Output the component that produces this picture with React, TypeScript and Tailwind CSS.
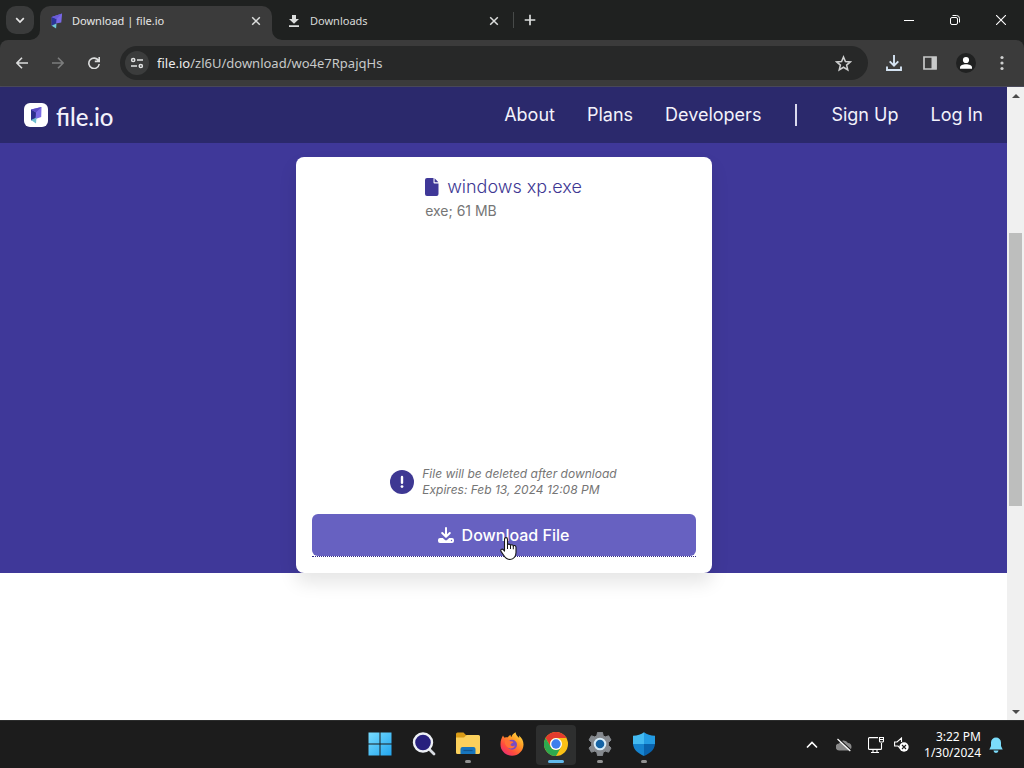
import type { ReactNode } from "react";

const uiFont = "font-['Noto_Sans','Open_Sans',sans-serif]";
const siteFont = "font-['Inter','Liberation_Sans',sans-serif]";

function FileMark({ className }: { className?: string }) {
  return (
    <svg viewBox="0 0 16 20" className={className} aria-hidden="true">
      <path d="M2 5 15 0.5 14 12 7 13 2 16Z" fill="#7a69e6" />
      <path d="M2 5 8 7.5 7.5 13 2 16Z" fill="#2b3596" />
      <path d="M2 5 15 0.5 8 7.5Z" fill="#6a5bd8" />
      <path d="M2 16 8 13 7.500 19.500Z" fill="#6fc9d6" />
    </svg>
  );
}

function LogoMark({ className }: { className?: string }) {
  return (
    <svg viewBox="0 0 24 24" className={className} aria-hidden="true">
      <rect width="24" height="24" rx="6" fill="#fff" />
      <path d="M7 6.500 17.500 4 17.200 14 11.500 16 7 17Z" fill="#7a6be4" />
      <path d="M7 6.500 12 9.500 11.500 16 7 17.500Z" fill="#2b2f8c" />
      <path d="M7 6.500 17.500 4 12 9.500Z" fill="#5a4cc4" />
      <path d="M7 17 12.500 14.500 12 20.500Z" fill="#6fbfd0" />
    </svg>
  );
}

function CloseIcon() {
  return (
    <svg viewBox="0 0 10 10" className="size-2.5" fill="none" stroke="#dcdedd" strokeWidth="1.500" aria-hidden="true">
      <path d="m1.200 1.200 7.600 7.600M8.800 1.200 1.200 8.800" />
    </svg>
  );
}

function TabStrip() {
  return (
    <div className="flex h-10 items-start bg-[#1f2120]">
      <button aria-label="Search tabs" className="mt-1.5 ml-1.5 flex size-7 shrink-0 items-center justify-center rounded-[10px] bg-[#3a3b3b]">
        <svg viewBox="0 0 10 7" className="h-[7px] w-2.5" fill="none" stroke="#e6e6e6" strokeWidth="1.700" aria-hidden="true">
          <path d="m1.200 1.200 3.800 3.800 3.800-3.800" />
        </svg>
      </button>
      <div role="tablist" aria-label="Open tabs" className="flex min-w-0 items-start">
        <div className="relative mt-1.5 ml-1.5 flex h-[34px] w-[232px] items-center rounded-t-[10px] bg-[#3b3b3b] pr-[11px] pb-1 pl-2.5">
          <svg viewBox="0 0 10 10" className="absolute bottom-0 -left-2.5 size-2.5" aria-hidden="true">
            <path d="M10 0v10H0A10 10 0 0 0 10 0Z" fill="#3b3b3b" />
          </svg>
          <svg viewBox="0 0 10 10" className="absolute -right-2.5 bottom-0 size-2.5" aria-hidden="true">
            <path d="M0 0v10h10A10 10 0 0 1 0 0Z" fill="#3b3b3b" />
          </svg>
          <FileMark className="h-4 w-[13px]" />
          <button role="tab" aria-selected="true" className="ml-[9px] grow truncate text-left text-[11px] leading-4 text-[#e6e6e6]">
            Download | file.io
          </button>
          <button aria-label="Close Download tab"><CloseIcon /></button>
        </div>
        <div className="mt-1.5 flex h-[34px] w-[241px] items-center pr-3.5 pb-1 pl-4">
          <svg viewBox="0 0 12 14" className="h-3.5 w-3" fill="#dcdedd" aria-hidden="true">
            <path d="M4 1h4v4h3L6 9.800 1 5h3ZM1 11.200h10V13H1Z" />
          </svg>
          <button role="tab" aria-selected="false" className="ml-2.5 grow truncate text-left text-[11px] leading-4 text-[#d7d9d8]">
            Downloads
          </button>
          <button aria-label="Close Downloads tab"><CloseIcon /></button>
        </div>
      </div>
      <span className="mt-3 h-4 w-px bg-[#474a49]" />
      <button aria-label="New tab" className="mt-3.5 ml-2.5">
        <svg viewBox="0 0 12 12" className="size-3" stroke="#dcdedd" strokeWidth="1.700" aria-hidden="true">
          <path d="M6 .7v10.600M.7 6h10.600" />
        </svg>
      </button>
      <div className="mt-[15px] mr-[18px] ml-auto flex items-center gap-9">
        <button aria-label="Minimize">
          <svg viewBox="0 0 10 10" className="size-2.5" stroke="#fff" aria-hidden="true"><path d="M0 5.500h10" /></svg>
        </button>
        <button aria-label="Restore">
          <svg viewBox="0 0 10 10" className="size-2.5" fill="none" stroke="#fff" aria-hidden="true">
            <rect x=".5" y="2.500" width="7" height="7" rx="1.500" />
            <path d="M2.500.5h4a3 3 0 0 1 3 3v4" />
          </svg>
        </button>
        <button aria-label="Close window">
          <svg viewBox="0 0 10 10" className="size-2.5" stroke="#fff" strokeWidth="1.100" aria-hidden="true"><path d="m0 0 10 10M10 0 0 10" /></svg>
        </button>
      </div>
    </div>
  );
}

function Toolbar() {
  return (
    <div className="bg-[#1f2120]">
      <div className="flex h-[47px] items-center rounded-t-lg border-b border-[#4b4a5a] bg-[#3b3b3b] pr-5 pl-4">
        <button aria-label="Back">
          <svg viewBox="0 0 12 12" className="size-3" fill="none" stroke="#dcdddd" strokeWidth="1.600" aria-hidden="true">
            <path d="M12 6H1.200M6 .8.9 6 6 11.200" />
          </svg>
        </button>
        <button aria-label="Forward" className="ml-6">
          <svg viewBox="0 0 12 12" className="size-3" fill="none" stroke="#7c7d7d" strokeWidth="1.600" aria-hidden="true">
            <path d="M0 6h10.800M6 .8 11.100 6 6 11.200" />
          </svg>
        </button>
        <button aria-label="Reload" className="ml-6">
          <svg viewBox="0 0 12 12" className="size-3" fill="none" stroke="#dcdddd" strokeWidth="1.600" aria-hidden="true">
            <path d="M10.500 3.600A5.200 5.200 0 1 0 11.200 7M11.200 0v4.400H6.800" />
          </svg>
        </button>
        <div className="ml-5 flex h-[34px] min-w-0 grow items-center rounded-full bg-[#272828] pr-4 pl-[5px]">
          <button aria-label="Site information" className="flex size-6 shrink-0 items-center justify-center rounded-full bg-[#3b3c3c]">
            <svg viewBox="0 0 14 12" className="h-3 w-3.5" fill="none" stroke="#e2e3e3" strokeWidth="1.500" aria-hidden="true">
              <circle cx="3.200" cy="3" r="1.600" /><path d="M7 3h6M1 9h6" /><circle cx="10.800" cy="9" r="1.600" />
            </svg>
          </button>
          <span className="ml-2 min-w-0 grow truncate text-[13px] leading-5 text-[#c8caca]">
            <span className="text-[#ececec]">file.io</span>/zl6U/download/wo4e7RpajqHs
          </span>
          <button aria-label="Bookmark this page">
            <svg viewBox="0 0 24 24" className="size-[17px]" fill="none" stroke="#cfd0d0" strokeWidth="2.200" aria-hidden="true">
              <path d="m12 2.800 2.700 6.300 6.900.6-5.200 4.500 1.600 6.700-6-3.600-6 3.600 1.600-6.700L2.400 9.700l6.900-.6Z" />
            </svg>
          </button>
        </div>
        <button aria-label="Downloads" className="ml-[18px]">
          <svg viewBox="0 0 16 16" className="size-4" fill="none" stroke="#d5e3f2" strokeWidth="1.900" aria-hidden="true">
            <path d="M8 0v10.500M3.700 6.400 8 10.700l4.300-4.300M1 11.500V15h14v-3.500" />
          </svg>
        </button>
        <button aria-label="Side panel" className="ml-5">
          <svg viewBox="0 0 16 16" className="size-4" aria-hidden="true">
            <path d="M2 2h12v12H2Z" fill="none" stroke="#c8c9c9" strokeWidth="1.700" /><path d="M9.500 2h5v12h-5Z" fill="#c8c9c9" />
          </svg>
        </button>
        <button aria-label="Profile" className="ml-[18px]">
          <svg viewBox="0 0 20 20" className="size-5" aria-hidden="true">
            <circle cx="10" cy="10" r="10" fill="#202121" /><circle cx="10" cy="7" r="3.100" fill="#fff" />
            <path d="M4 15.700v-1.400c0-2 3-3.100 6-3.100s6 1.100 6 3.100v1.400Z" fill="#fff" />
          </svg>
        </button>
        <button aria-label="Menu" className="ml-6">
          <svg viewBox="0 0 4 16" className="h-4 w-1" fill="#cfd0d0" aria-hidden="true">
            <circle cx="2" cy="2.500" r="1.600" /><circle cx="2" cy="8" r="1.600" /><circle cx="2" cy="13.500" r="1.600" />
          </svg>
        </button>
      </div>
    </div>
  );
}

function SiteHeader() {
  return (
    <header className="flex h-14 items-center justify-between bg-[#2b296c] px-6 text-[#f3f2fb] shadow-sm">
      <a href="#home" className="flex items-center gap-2">
        <LogoMark className="size-6" />
        <span className="mt-1 font-['Lato',sans-serif] text-2xl leading-6 font-medium">file.io</span>
      </a>
      <nav aria-label="Main" className="flex items-center gap-8 text-lg">
        <a href="#about">About</a>
        <a href="#plans">Plans</a>
        <a href="#developers">Developers</a>
        <span className="mx-0.5 h-[22px] w-0.5 bg-[#dad9ee]" />
        <a href="#signup">Sign Up</a>
        <a href="#login">Log In</a>
      </nav>
    </header>
  );
}

function DownloadCard() {
  return (
    <section className="flex min-h-[416px] w-[416px] flex-col rounded-lg bg-white px-4 pb-4 shadow-[0_10px_18px_rgba(0,0,0,0.10)]">
      <div className="mx-auto flex flex-col pt-4">
        <h1 className="flex items-center gap-2 text-lg leading-7 font-light text-[#3e3893]">
          <svg viewBox="0 0 14 18" className="h-[18px] w-3.5" fill="#3f3898" aria-hidden="true">
            <path d="M2 0h6.500v4.500A1 1 0 0 0 9.500 5.500H13.500V16a2 2 0 0 1-2 2H2a2 2 0 0 1-2-2V2A2 2 0 0 1 2 0ZM9.600.2 13.400 4.300H9.600Z" />
          </svg>
          windows xp.exe
        </h1>
        <p className="text-sm leading-5 text-[#767676]">exe; 61 MB</p>
      </div>
      <div className="mx-auto mt-auto flex items-center gap-2">
        <svg viewBox="0 0 24 24" className="size-6" aria-hidden="true">
          <circle cx="12" cy="12" r="12" fill="#3e3893" />
          <path d="M12 7v5.700" stroke="#fff" strokeWidth="2.400" strokeLinecap="round" /><circle cx="12" cy="16.600" r="1.400" fill="#fff" />
        </svg>
        <p className="text-xs leading-4 text-[#757575] italic">
          File will be deleted after download
          <br />
          Expires: Feb 13, 2024 12:08 PM
        </p>
      </div>
      <div className="relative mt-4 border-b border-dotted border-[#332c86]">
        <button className="flex h-[42px] w-full items-center justify-center gap-2 rounded-md bg-[#6761c1] font-medium text-white">
          <svg viewBox="0 0 16 16" className="size-4" aria-hidden="true">
            <path d="M8 1v8.500M4.200 6 8 9.800 11.800 6" fill="none" stroke="#fff" strokeWidth="2" strokeLinecap="round" strokeLinejoin="round" />
            <path d="M2 11h2.800L7 13.100a1.500 1.500 0 0 0 2 0l2.200-2.100H14a2 2 0 0 1 2 2v1a2 2 0 0 1-2 2H2a2 2 0 0 1-2-2v-1a2 2 0 0 1 2-2Z" fill="#fff" />
            <circle cx="13.500" cy="13.500" r=".7" fill="#6761c1" />
          </svg>
          Download File
        </button>
        <svg viewBox="0 0 18 24" className="pointer-events-none absolute top-[23px] left-1/2 h-6 w-[18px] -translate-x-1" aria-hidden="true">
          <path d="M4.500 2.500C4.500 0 7.500 0 7.500 2.500V8c.3-1.300 2.700-1.200 3 .5.500-1.200 2.500-1 2.800.6.700-1.100 2.700-.7 2.700 1.400v5c0 3.400-2 7-6 7-4.200 0-5-2.200-6.500-4.500L1.200 14.600c-1.300-2 .9-3.200 2.100-1.900l1.200 1.400Z" fill="#fff" stroke="#171718" strokeWidth="1.100" strokeLinejoin="round" />
          <path d="M7.500 8v4M10.500 8.500V12M13.300 9v3.300" stroke="#171718" fill="none" />
        </svg>
      </div>
    </section>
  );
}

function Scrollbar() {
  return (
    <div className="flex w-[17px] shrink-0 flex-col bg-[#f0f0f0]">
      <button aria-label="Scroll up" className="flex h-[17px] items-center justify-center">
        <svg viewBox="0 0 8 4" className="h-1 w-2" fill="#4b4b4b" aria-hidden="true"><path d="M0 4 4 0l4 4Z" /></svg>
      </button>
      <div className="flex grow flex-col px-0.5">
        <span className="flex-[129]" />
        <span className="flex-[273] bg-[#bdbebd]" />
        <span className="flex-[197]" />
      </div>
      <button aria-label="Scroll down" className="flex h-[17px] items-center justify-center">
        <svg viewBox="0 0 8 4" className="h-1 w-2" fill="#4b4b4b" aria-hidden="true"><path d="M0 0h8L4 4Z" /></svg>
      </button>
    </div>
  );
}

function TaskButton({ label, state, children }: { label: string; state?: "open" | "active"; children: ReactNode }) {
  return (
    <button
      aria-label={label}
      className={
        "flex h-10 w-10 flex-col items-center rounded pt-[7px] " + (state === "active" ? "bg-[#2e2f2f]" : "")
      }
    >
      {children}
      {state === "open" && <span className="mt-1 h-[3px] w-1.5 rounded-full bg-[#929292]" />}
      {state === "active" && <span className="mt-1 h-[3px] w-4 rounded-full bg-[#61b9eb]" />}
    </button>
  );
}

function Taskbar() {
  return (
    <footer className="grid h-12 shrink-0 grid-cols-[1fr_auto_1fr] items-center border-t border-[#2c2d2d] bg-[#1c1c1c]">
      <span />
      <div className="flex gap-1">
        <TaskButton label="Start">
          <svg viewBox="0 0 24 24" className="size-6" aria-hidden="true">
            <defs><linearGradient id="win" x1="0" y1="0" x2="1" y2="1"><stop stopColor="#78dcff" /><stop offset="1" stopColor="#22a5ee" /></linearGradient></defs>
            <path d="M.5.5h11v11H.5ZM12.500.5h11v11h-11ZM.5 12.500h11v11H.5ZM12.500 12.500h11v11h-11Z" fill="url(#win)" />
          </svg>
        </TaskButton>
        <TaskButton label="Search">
          <svg viewBox="0 0 24 24" className="size-6" aria-hidden="true">
            <path d="m17 17 5 5" stroke="#d9dce2" strokeWidth="2.800" strokeLinecap="round" />
            <circle cx="11" cy="10.500" r="9" fill="#27207e" stroke="#edf0f5" strokeWidth="2.400" />
          </svg>
        </TaskButton>
        <TaskButton label="File Explorer" state="open">
          <svg viewBox="0 0 24 24" className="size-6" aria-hidden="true">
            <path d="M0 2a1.500 1.500 0 0 1 1.500-1.500h6L10.500 3.500V8H0Z" fill="#d99b16" />
            <path d="M0 5.500h8L10.500 3h12A1.500 1.500 0 0 1 24 4.500v16a1.500 1.500 0 0 1-1.500 1.500h-21A1.500 1.500 0 0 1 0 20.500Z" fill="#fbd05c" />
            <path d="M4.500 22v-5a2 2 0 0 1 2-2h11a2 2 0 0 1 2 2v5Z" fill="#1775bd" /><path d="M7.500 18.500h9" stroke="#11558f" strokeWidth="1.200" />
          </svg>
        </TaskButton>
        <TaskButton label="Firefox">
          <svg viewBox="0 0 24 24" className="size-6" aria-hidden="true">
            <defs><linearGradient id="fox" x1="1" y1="0" x2=".2" y2="1"><stop stopColor="#fff04d" /><stop offset=".4" stopColor="#ff9b25" /><stop offset=".75" stopColor="#ff4a3e" /><stop offset="1" stopColor="#e62b78" /></linearGradient></defs>
            <path d="M3 3.500c.4 1 .9 1.700 1.600 2.300 1-.5 2.100-.6 3.300-.5.600-1.100 1.600-2 2.700-2.600-.2 1 .1 1.800.8 2.400C12 3 13.400 1.300 15.600.3c.1 2.800 2 4.200 3.600 5.600 0-1 0-1.600-.2-2.400C22 6 23.600 9.300 23.500 12.700 23.300 19 18.300 23.700 12 23.700S.6 19 .5 12.800C.4 9 1.400 6.100 3 3.500Z" fill="url(#fox)" />
            <circle cx="12" cy="12.800" r="5" fill="#784bc4" />
            <path d="M5 9c2-2 4-1.500 5.500.2 1.300.1 2.800.3 3 1.100-.5 1-2.500 1-3 2.200 0 1.800 2.700 2.200 4.700.8-1 3.200-5.300 4.500-8 1.800C5.400 13.500 4.500 11.300 5 9Z" fill="#ff7135" />
          </svg>
        </TaskButton>
        <TaskButton label="Google Chrome" state="active">
          <svg viewBox="0 0 24 24" className="size-6" aria-hidden="true">
            <circle cx="12" cy="12" r="12" fill="#fbc116" />
            <path d="M1.600 6A12 12 0 0 1 22.400 6H12a6 6 0 0 0-5.200 9Z" fill="#e33b2e" />
            <path d="M1.600 6A12 12 0 0 0 12 24l5.200-9a6 6 0 0 1-10.400 0Z" fill="#2da94f" />
            <circle cx="12" cy="12" r="6" fill="#fff" /><circle cx="12" cy="12" r="4.700" fill="#3d7fed" />
          </svg>
        </TaskButton>
        <TaskButton label="Settings" state="open">
          <svg viewBox="0 0 24 24" className="size-6" aria-hidden="true">
            <path d="M9.600.3h4.800l.8 3.500 2 1.100 3.400-1.100L23 8l-2.600 2.500v2.800L23 16l-2.400 4.200-3.400-1.100-2 1.100-.8 3.500H9.600l-.8-3.500-2-1.100-3.400 1.100L1 16l2.600-2.700v-2.800L1 8l2.400-4.200 3.400 1.100 2-1.100Z" fill="#85898e" stroke="#85898e" strokeLinejoin="round" />
            <circle cx="12" cy="12" r="5.300" fill="#1463a4" stroke="#d8edf9" strokeWidth="2" />
          </svg>
        </TaskButton>
        <TaskButton label="Windows Security" state="open">
          <svg viewBox="0 0 24 24" className="size-6" aria-hidden="true">
            <path d="M12 .2c3 2 6.500 3.400 11 3.500V12H12Z" fill="#239be2" /><path d="M12 .2C9 2.200 5.500 3.600 1 3.700V12h11Z" fill="#43baf1" />
            <path d="M1 12h11v12C6 21.200 1.500 18 1 12Z" fill="#1684cf" /><path d="M12 12h11c-.5 6-5 9.200-11 12Z" fill="#0963ad" />
          </svg>
        </TaskButton>
      </div>
      <div className="flex items-center justify-end pr-[21px] text-white">
        <button aria-label="Show hidden icons">
          <svg viewBox="0 0 12 8" className="h-2 w-3" fill="none" stroke="#fff" strokeWidth="1.600" aria-hidden="true"><path d="m1 6.500 5-5 5 5" /></svg>
        </button>
        <button aria-label="OneDrive, not signed in" className="ml-[18px]">
          <svg viewBox="0 0 16 14" className="h-3.5 w-4" aria-hidden="true">
            <path d="M3.500 12.500a3.500 3.500 0 0 1-.5-7A5 5 0 0 1 12 5a3.800 3.800 0 0 1 .5 7.500Z" fill="#8a8a8a" />
            <path d="m2.500.5 13 12" stroke="#1c1c1c" strokeWidth="1.200" /><path d="m1.500 1 12.800 12" stroke="#fff" strokeWidth="1.200" />
          </svg>
        </button>
        <button aria-label="Network" className="ml-4">
          <svg viewBox="0 0 16 16" className="size-4" fill="none" stroke="#fff" strokeWidth="1.100" aria-hidden="true">
            <path d="M10 .6H1.500a1 1 0 0 0-1 1v9.800a1 1 0 0 0 1 1h11a1 1 0 0 0 1-1V6M5 12.500v3M9 12.500v3M3 15.500h8M11.500.5h4V4a1 1 0 0 1-1 1h-2a1 1 0 0 1-1-1ZM11.500 2.500h4" />
          </svg>
        </button>
        <button aria-label="Volume muted" className="ml-2.5">
          <svg viewBox="0 0 15 15" className="size-[15px]" aria-hidden="true">
            <path d="M6.500 11.500 4 9H.6V5H3L7.500 1v4" fill="none" stroke="#fff" strokeWidth="1.100" />
            <circle cx="10" cy="10" r="4.700" fill="#fff" /><path d="m8 8 4 4m0-4-4 4" stroke="#1c1c1c" strokeWidth="1.100" />
          </svg>
        </button>
        <p className="ml-[15px] text-right text-xs leading-4">
          3:22 PM
          <br />
          1/30/2024
        </p>
        <button aria-label="Notifications" className="ml-2">
          <svg viewBox="0 0 14 16" className="h-4 w-3.5" fill="#7bdcfa" aria-hidden="true">
            <path d="M7 .5A5 5 0 0 0 2 5.500V9L.3 12.500h13.400L12 9V5.500A5 5 0 0 0 7 .5ZM4.500 13.500h5a2.500 2.500 0 0 1-5 0Z" />
          </svg>
        </button>
      </div>
    </footer>
  );
}

export default function App() {
  return (
    <div className={`flex h-screen flex-col overflow-hidden bg-white ${uiFont}`}>
      <TabStrip />
      <Toolbar />
      <div className="flex min-h-0 grow">
        <div className={`min-w-0 grow bg-white ${siteFont}`}>
          <SiteHeader />
          <main className="flex justify-center bg-[#3f3899] pt-3.5">
            <DownloadCard />
          </main>
        </div>
        <Scrollbar />
      </div>
      <Taskbar />
    </div>
  );
}
